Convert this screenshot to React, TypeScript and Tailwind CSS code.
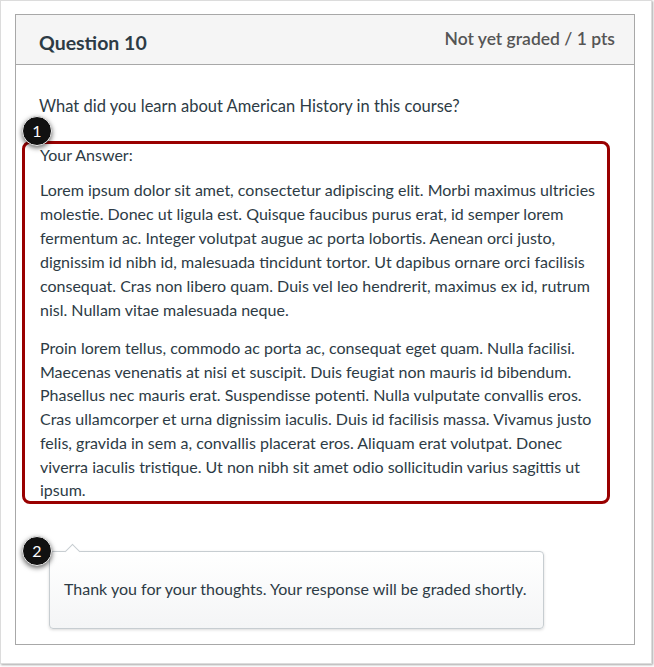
import React from "react";

const p1 = [
  "Lorem ipsum dolor sit amet, consectetur adipiscing elit. Morbi maximus ultricies",
  "molestie. Donec ut ligula est. Quisque faucibus purus erat, id semper lorem",
  "fermentum ac. Integer volutpat augue ac porta lobortis. Aenean orci justo,",
  "dignissim id nibh id, malesuada tincidunt tortor. Ut dapibus ornare orci facilisis",
  "consequat. Cras non libero quam. Duis vel leo hendrerit, maximus ex id, rutrum",
  "nisl. Nullam vitae malesuada neque.",
];
const p2 = [
  "Proin lorem tellus, commodo ac porta ac, consequat eget quam. Nulla facilisi.",
  "Maecenas venenatis at nisi et suscipit. Duis feugiat non mauris id bibendum.",
  "Phasellus nec mauris erat. Suspendisse potenti. Nulla vulputate convallis eros.",
  "Cras ullamcorper et urna dignissim iaculis. Duis id facilisis massa. Vivamus justo",
  "felis, gravida in sem a, convallis placerat eros. Aliquam erat volutpat. Donec",
  "viverra iaculis tristique. Ut non nibh sit amet odio sollicitudin varius sagittis ut",
  "ipsum.",
];

function Badge({ n, className }: { n: string; className: string }) {
  return (
    <div
      className={
        "absolute w-[30px] h-[30px] rounded-full bg-[#111] text-white flex items-center justify-center text-[16px] border border-[#eee] shadow-[0_2px_5px_rgba(0,0,0,0.6)] " +
        className
      }
    >
      {n}
    </div>
  );
}

export default function App() {
  return (
    <div className="relative w-[654px] h-[667px] bg-white font-['Lato','Noto_Sans',sans-serif] text-[#2d3b45] overflow-hidden">
      <div className="w-[652px] h-[664px] border border-[#dcdcdc] shadow-[1px_1px_2px_rgba(0,0,0,0.35)] pt-[13px] pl-[14px]">
        <div className="w-[620px] h-[631px] border border-[#a8a8a8] flex flex-col">
          <div className="h-[50px] bg-[#f5f5f5] border-b border-[#a8a8a8] flex justify-between pl-[23px] pr-[19px]">
            <div className="text-[19.5px] font-bold leading-none pt-[18px] text-[#2d3b45]">Question 10</div>
            <div className="text-[17.5px] font-semibold leading-none pt-[15px] text-[#555]">Not yet graded / 1 pts</div>
          </div>
          <div className="flex flex-col pl-[6px]">
            <div className="pl-[17px] pt-[29px] text-[16.5px] leading-[24px]">
              What did you learn about American History in this course?
            </div>
            <div className="mt-[23px] w-[588px] h-[363px] border-[3px] border-[#990000] rounded-[8px] pl-[15px] text-[16px] leading-[24px]">
              <div className="leading-[22px]">Your Answer:</div>
              <p className="mt-[12px] whitespace-nowrap">
                {p1.map((l, i) => (
                  <React.Fragment key={i}>
                    {l}
                    {i < p1.length - 1 && <br />}
                  </React.Fragment>
                ))}
              </p>
              <p className="mt-[14px] whitespace-nowrap leading-[23.7px]">
                {p2.map((l, i) => (
                  <React.Fragment key={i}>
                    {l}
                    {i < p2.length - 1 && <br />}
                  </React.Fragment>
                ))}
              </p>
            </div>
            <div className="relative ml-[27px] mt-[47px] w-[495px] h-[78px] rounded-[4px] border border-[#c7cdd1] bg-gradient-to-b from-white to-[#f4f5f6] shadow-[0_1px_3px_rgba(0,0,0,0.15)] pl-[14px] pt-[25px] text-[16px] leading-[24px] text-[#2d3b45]">
              <div className="absolute left-[17px] top-[-6px] w-[11px] h-[11px] rotate-45 bg-white border-l border-t border-[#c7cdd1]" />
              Thank you for your thoughts. Your response will be graded shortly.
            </div>
          </div>
        </div>
      </div>
      <Badge n="1" className="left-[22px] top-[116px]" />
      <Badge n="2" className="left-[22px] top-[536px]" />
    </div>
  );
}
